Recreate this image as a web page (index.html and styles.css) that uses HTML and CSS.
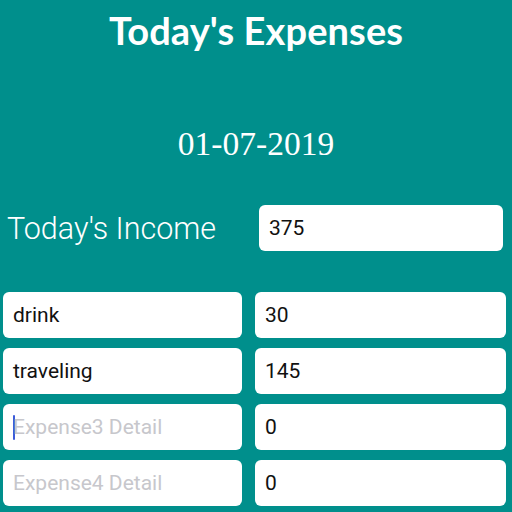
FILE: index.html
```html
<!DOCTYPE html>
<html lang="en">
<head>
	<meta charset="UTF-8">
	<meta name="viewport" content="width=device-width, initial-scale=1.0">
	<title>Today's Expenses</title>
	<link rel="stylesheet" href="styles.css">
</head>
<body>
	<div class="screen">
		<h1 class="title">Today's Expenses</h1>
		<div class="date">01-07-2019</div>

		<div class="income">
			<span class="income-label">Today's Income</span>
			<div class="field income-field">375</div>
		</div>

		<div class="expenses">
			<div class="field">drink</div>
			<div class="field">30</div>
			<div class="field">traveling</div>
			<div class="field">145</div>
			<div class="field placeholder"><span class="caret"></span>Expense3 Detail</div>
			<div class="field">0</div>
			<div class="field placeholder">Expense4 Detail</div>
			<div class="field">0</div>
		</div>
	</div>
</body>
</html>
```

FILE: styles.css
```css
html, body {margin: 0;padding: 0;}
body {background: #008f8c;width: 512px;height: 512px;overflow: hidden;}

.screen {display: flex;flex-direction: column;}

.title {margin: 8px 0 0;text-align: center;font-family: Lato, "Open Sans", sans-serif;font-weight: 700;font-size: 38px;line-height: 44px;color: #fff;letter-spacing: 0.1px;}

.date {margin-top: 72px;text-align: center;font-family: "Liberation Serif", serif;font-size: 33.5px;line-height: 40px;color: #fff;}

.income {display: flex;align-items: center;margin-top: 41px;padding: 0 9px 0 7px;}
.income-label {flex: 0 0 252px;font-family: Roboto, "Liberation Sans", sans-serif;font-weight: 300;font-size: 30.5px;color: #fff;}
.income-field {flex: 1;}

.expenses {display: grid;grid-template-columns: 239px 251px;column-gap: 13px;row-gap: 10px;margin-top: 41px;padding: 0 3px;}

.field {display: flex;align-items: center;height: 46px;box-sizing: border-box;padding: 0 10px;background: #fff;border-radius: 6px;font-family: Roboto, "Noto Sans", sans-serif;font-size: 21px;color: #111;}
.field.placeholder {color: #c7c7cc;}
.caret {display: inline-block;width: 2px;height: 25px;margin-right: -2px;background: #3d5bd9;border-radius: 1px;}
```
